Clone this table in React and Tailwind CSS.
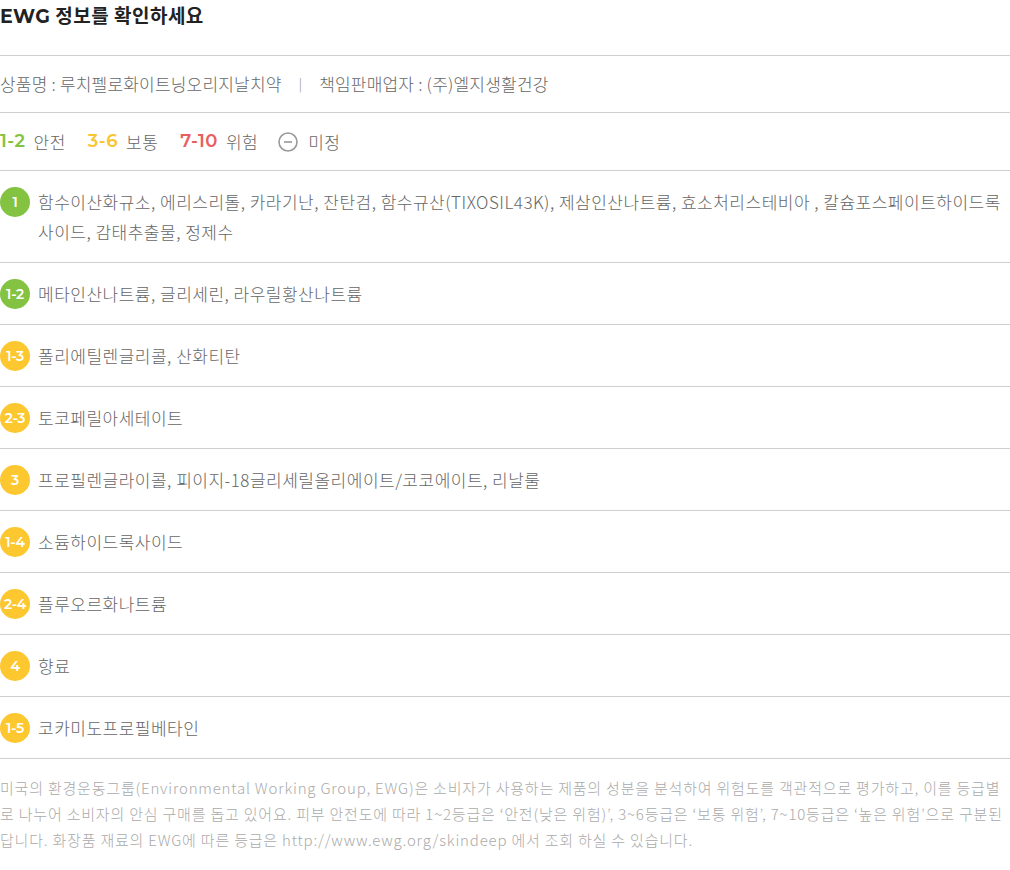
const KR = { fontFamily: '"Noto Sans CJK KR", "Noto Sans", sans-serif' };
const NUM = { fontFamily: 'Montserrat, Inter, "Noto Sans", sans-serif' };

const GREEN = 'bg-[#83c341]';
const YELLOW = 'bg-[#fdc72f]';

const items = [
  { grade: '1', color: GREEN, text: '함수이산화규소, 에리스리톨, 카라기난, 잔탄검, 함수규산(TIXOSIL43K), 제삼인산나트륨, 효소처리스테비아 , 칼슘포스페이트하이드록사이드, 감태추출물, 정제수' },
  { grade: '1-2', color: GREEN, text: '메타인산나트륨, 글리세린, 라우릴황산나트륨' },
  { grade: '1-3', color: YELLOW, text: '폴리에틸렌글리콜, 산화티탄' },
  { grade: '2-3', color: YELLOW, text: '토코페릴아세테이트' },
  { grade: '3', color: YELLOW, text: '프로필렌글라이콜, 피이지-18글리세릴올리에이트/코코에이트, 리날룰' },
  { grade: '1-4', color: YELLOW, text: '소듐하이드록사이드' },
  { grade: '2-4', color: YELLOW, text: '플루오르화나트륨' },
  { grade: '4', color: YELLOW, text: '향료' },
  { grade: '1-5', color: YELLOW, text: '코카미도프로필베타인' },
];

function Badge({ grade, color }) {
  return (
    <span
      className={`flex h-[30px] w-[30px] shrink-0 items-center justify-center rounded-full text-[14px] font-semibold tracking-[-0.3px] text-white ${color}`}
      style={NUM}
    >
      {grade}
    </span>
  );
}

export default function App() {
  return (
    <div className="w-[1010px] bg-white font-light tracking-[0.5px] text-[#666]" style={KR}>
      <h1 className="h-[55px] text-[19px] font-bold leading-[30px] text-[#222]">
        <span style={NUM}>EWG</span> 정보를 확인하세요
      </h1>

      <div className="flex h-[57px] items-center border-t border-[#cfcfcf] text-[17px] tracking-[0.2px]">
        <span>상품명 : 루치펠로화이트닝오리지날치약</span>
        <span className="mx-[17px] text-[13px] text-[#888]">|</span>
        <span>책임판매업자 : (주)엘지생활건강</span>
      </div>

      <div className="flex h-[58px] items-center border-t border-[#cfcfcf] text-[17px]">
        <span className="mr-2 text-[18px] font-semibold text-[#83c341]" style={NUM}>1-2</span>
        <span className="mr-[22px]">안전</span>
        <span className="mr-2 text-[18px] font-semibold text-[#f9c533]" style={NUM}>3-6</span>
        <span className="mr-[22px]">보통</span>
        <span className="mr-2 text-[18px] font-semibold text-[#e85f5f]" style={NUM}>7-10</span>
        <span className="mr-5">위험</span>
        <svg width="20" height="20" viewBox="0 0 20 20" className="mr-[10px]">
          <circle cx="10" cy="10" r="9" fill="none" stroke="#999" strokeWidth="1.6" />
          <line x1="6" y1="10" x2="14" y2="10" stroke="#999" strokeWidth="1.6" />
        </svg>
        <span>미정</span>
      </div>

      {items.map((it) => (
        <div key={it.grade} className="flex items-start gap-2 border-t border-[#cfcfcf] pt-4 pb-[15px]">
          <Badge grade={it.grade} color={it.color} />
          <p className="text-[17px] leading-[30px]">{it.text}</p>
        </div>
      ))}

      <p className="border-t border-[#cfcfcf] pt-4 text-[15px] leading-[26px] tracking-[0.8px] text-[#aaa]">
        미국의 환경운동그룹(Environmental Working Group, EWG)은 소비자가 사용하는 제품의 성분을 분석하여 위험도를 객관적으로 평가하고, 이를 등급별로 나누어 소비자의 안심 구매를 돕고 있어요. 피부 안전도에 따라 1~2등급은 ‘안전(낮은 위험)’, 3~6등급은 ‘보통 위험’, 7~10등급은 ‘높은 위험’으로 구분된답니다. 화장품 재료의 EWG에 따른 등급은 http://www.ewg.org/skindeep 에서 조회 하실 수 있습니다.
      </p>
    </div>
  );
}
